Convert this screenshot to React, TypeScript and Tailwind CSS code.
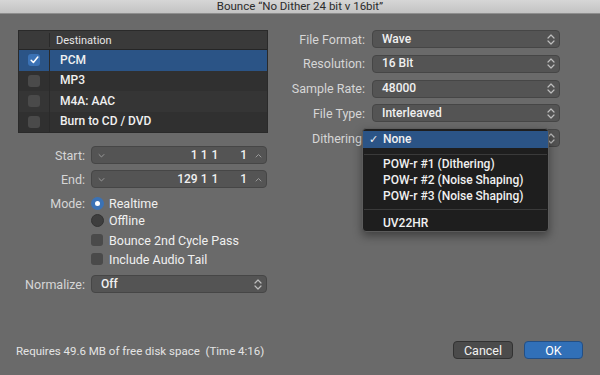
import React from "react";

const font = { fontFamily: "Roboto, 'Liberation Sans', sans-serif" };

function UpDown() {
  return (
    <svg width="8" height="11" viewBox="0 0 8 11" fill="none" stroke="#bdbdbd" strokeWidth="1.2" strokeLinecap="round" strokeLinejoin="round">
      <path d="M1 4 L4 1 L7 4" />
      <path d="M1 7 L4 10 L7 7" />
    </svg>
  );
}

function Chev({ up }: { up?: boolean }) {
  return (
    <svg width="7" height="5" viewBox="0 0 7 5" fill="none" stroke="#9a9a9a" strokeWidth="1" strokeLinecap="round" strokeLinejoin="round">
      {up ? <path d="M1 4 L3.5 1.5 L6 4" /> : <path d="M1 1.5 L3.5 4 L6 1.5" />}
    </svg>
  );
}

function Popup({ value, w }: { value: string; w: string }) {
  return (
    <div className={`${w} h-[18px] rounded-[4px] bg-[#545454] border border-[#464646] flex items-center pl-[9px] pr-[4px] text-[12px] font-medium text-[#f0f0f0]`}>
      <span className="flex-1">{value}</span>
      <UpDown />
    </div>
  );
}

function Stepper({ a, b, c, d }: { a: string; b: string; c: string; d: string }) {
  return (
    <div className="w-[176px] h-[18px] rounded-[4px] bg-[#545454] border border-[#464646] flex items-center pl-[6px] pr-[4px] text-[12px] font-medium text-[#f0f0f0]">
      <Chev />
      <span className="w-[94px] text-right">{a}</span>
      <span className="w-[10px] text-right">{b}</span>
      <span className="w-[11px] text-right">{c}</span>
      <span className="w-[29px] text-right">{d}</span>
      <span className="ml-[8px] flex"><Chev up /></span>
    </div>
  );
}

function Check({ checked }: { checked?: boolean }) {
  return (
    <div className={`w-[12px] h-[12px] rounded-[3px] flex items-center justify-center ${checked ? "bg-[#3b72b5]" : "bg-[#4a4a4a]"}`}>
      {checked && (
        <svg width="9" height="8" viewBox="0 0 9 8" fill="none" stroke="white" strokeWidth="1.5" strokeLinecap="round" strokeLinejoin="round">
          <path d="M1.2 4.3 L3.4 6.5 L7.8 1" />
        </svg>
      )}
    </div>
  );
}

function Radio({ on }: { on?: boolean }) {
  return (
    <div className={`w-[13px] h-[13px] rounded-full flex items-center justify-center ${on ? "bg-[#3b72b5]" : "bg-[#3e3e3e] border border-[#333]"}`}>
      {on && <div className="w-[5px] h-[5px] rounded-full bg-white" />}
    </div>
  );
}

export default function App() {
  const rows = ["PCM", "MP3", "M4A: AAC", "Burn to CD / DVD"];
  return (
    <div className="w-[600px] h-[375px] bg-[#6a6a6a] flex flex-col relative overflow-hidden leading-[15px]" style={font}>
      <div className="h-[14px] bg-gradient-to-b from-[#d6d6d6] to-[#c3c3c3] border-b border-[#8e8e8e] flex items-center justify-center text-[11.5px] text-[#2c2c2c]">
        Bounce “No Dither 24 bit v 16bit”
      </div>
      <div className="flex flex-1 pt-[16px]">
        {/* Left */}
        <div className="ml-[18px] w-[250px] flex flex-col">
          <div className="border border-[#2a2a2a] bg-[#2f2f2f]">
            <div className="h-[19px] bg-[#3a3a3a] border-b border-[#262626] flex text-[11px] text-[#e6e6e6]">
              <div className="w-[31px] border-r border-[#2a2a2a] my-[2px]" />
              <div className="pl-[6px] flex items-center">Destination</div>
            </div>
            {rows.map((r, i) => (
              <div key={r} className={`h-[20.5px] flex items-center text-[12px] font-medium text-[#f0f0f0] ${i === 0 ? "bg-[#2b5486]" : i % 2 ? "bg-[#303030]" : "bg-[#353535]"}`}>
                <div className="w-[31px] h-full flex items-center justify-center border-r border-[#2a2a2a]">
                  <Check checked={i === 0} />
                </div>
                <div className="pl-[10px]">{r}</div>
              </div>
            ))}
          </div>
          <div className="mt-[13px] flex flex-col gap-[6px]">
            <div className="flex items-center gap-[6px]">
              <div className="w-[67px] text-right text-[12.5px] text-[#d6d6d6]">Start:</div>
              <Stepper a="1" b="1" c="1" d="1" />
            </div>
            <div className="flex items-center gap-[6px]">
              <div className="w-[67px] text-right text-[12.5px] text-[#d6d6d6]">End:</div>
              <Stepper a="129" b="1" c="1" d="1" />
            </div>
          </div>
          <div className="mt-[7px] flex">
            <div className="w-[67px] text-right text-[12.5px] text-[#d6d6d6] pt-[1px]">Mode:</div>
            <div className="ml-[6px] flex flex-col text-[12.5px] text-[#f0f0f0]">
              <div className="h-[16px] flex items-center gap-[5px]"><Radio on />Realtime</div>
              <div className="h-[16px] mt-[1px] flex items-center gap-[5px]"><Radio />Offline</div>
              <div className="h-[16px] mt-[4px] flex items-center gap-[6px]"><Check />Bounce 2nd Cycle Pass</div>
              <div className="h-[16px] mt-[3px] flex items-center gap-[6px]"><Check />Include Audio Tail</div>
            </div>
          </div>
          <div className="mt-[8px] flex items-center gap-[6px]">
            <div className="w-[67px] text-right text-[12.5px] text-[#d6d6d6]">Normalize:</div>
            <Popup value="Off" w="w-[176px]" />
          </div>
        </div>
        {/* Right */}
        <div className="ml-[22px] flex flex-col gap-[6.75px]">
          {[
            ["File Format:", "Wave"],
            ["Resolution:", "16 Bit"],
            ["Sample Rate:", "48000"],
            ["File Type:", "Interleaved"],
            ["Dithering:", ""],
          ].map(([l, v]) => (
            <div key={l} className="flex items-center gap-[7px]">
              <div className="w-[75px] text-right text-[12.5px] text-[#d6d6d6] whitespace-nowrap">{l}</div>
              <Popup value={v} w="w-[188px]" />
            </div>
          ))}
        </div>
      </div>
      <div className="h-[34px] flex items-start pl-[16px] pr-[17px]">
        <div className="text-[11.5px] text-[#e4e4e4] pt-[3px] flex-1">Requires 49.6 MB of free disk space&nbsp; (Time 4:16)</div>
        <div className="w-[60px] h-[18px] rounded-[4px] bg-[#4b4b4b] border border-[#323232] text-[12.5px] text-[#f2f2f2] flex items-center justify-center">Cancel</div>
        <div className="ml-[11px] w-[59px] h-[18px] rounded-[4px] bg-[#3170b8] border border-[#234f85] text-[12.5px] text-white flex items-center justify-center">OK</div>
      </div>
      {/* Dithering menu */}
      <div className="absolute left-[362px] top-[128px] w-[187px] h-[104px] bg-[#1e1e1e] border border-[#5c5c5c] rounded-[4px] shadow-[0_4px_10px_rgba(0,0,0,0.4)] text-[12px] font-medium text-[#f0f0f0] flex flex-col pt-[2px]">
        <div className="h-[17px] bg-[#2b5486] flex items-center">
          <span className="w-[20px] text-right pr-[5px] text-[11px]">✓</span>None
        </div>
        <div className="h-px bg-[#3a3a3a] mt-[6px] mx-[1px]" />
        <div className="h-[16px] mt-[2px] flex items-center pl-[20px]">POW-r #1 (Dithering)</div>
        <div className="h-[16px] flex items-center pl-[20px]">POW-r #2 (Noise Shaping)</div>
        <div className="h-[16px] flex items-center pl-[20px]">POW-r #3 (Noise Shaping)</div>
        <div className="h-px bg-[#3a3a3a] mt-[5px] mx-[1px]" />
        <div className="h-[16px] mt-[5px] flex items-center pl-[20px]">UV22HR</div>
      </div>
    </div>
  );
}
